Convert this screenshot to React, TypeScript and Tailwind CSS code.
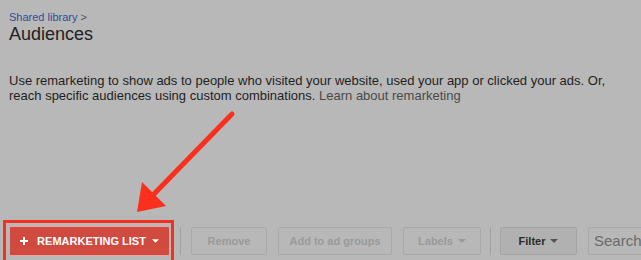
import React from "react";

function Caret({ className }: { className: string }) {
  return (
    <svg viewBox="0 0 8 4" className={className} fill="currentColor">
      <path d="M0 0h8L4 4z" />
    </svg>
  );
}

export default function App() {
  return (
    <div
      className="relative h-[260px] w-[641px] overflow-hidden bg-[#b8b8b8] text-[#1f1f1f]"
      style={{ fontFamily: '"Liberation Sans", Arial, sans-serif' }}
    >
      {/* Header */}
      <div className="px-[9px] pt-[11px]">
        <div className="text-[11px] leading-[13px]">
          <a className="text-[#2f4c9c]">Shared library</a>
          <span className="text-[#555]"> &gt;</span>
        </div>
        <h1 className="text-[18px] leading-[20px] text-[#222]">Audiences</h1>
        <p className="mt-[29px] text-[13px] leading-[15px] text-[#1f1f1f]">
          Use remarketing to show ads to people who visited your website, used your app or clicked your ads. Or,
          <br />
          reach specific audiences using custom combinations.{" "}
          <a className="text-[#4a4a4a]">Learn about remarketing</a>
        </p>
      </div>

      {/* Toolbar */}
      <div className="absolute left-[9px] top-[226px] flex items-center">
        <button className="flex h-[30px] w-[161px] items-center justify-center rounded-[2px] border border-[#e6a49c] bg-[#d04a3f] text-[11px] font-bold text-white">
          <svg viewBox="0 0 8 8" className="mr-[9px] h-[8px] w-[8px]" fill="currentColor">
            <path d="M3 0h2v3h3v2H5v3H3V5H0V3h3z" />
          </svg>
          <span>REMARKETING LIST</span>
          <Caret className="ml-[6px] h-[4px] w-[7px]" />
        </button>
        <div className="mx-[10px] h-[28px] w-px bg-[#a3a3a3]" />
        <button className="h-[28px] w-[76px] rounded-[2px] border border-[#a9a9a9] text-[11px] font-bold text-[#9a9a9a]">
          Remove
        </button>
        <button className="ml-[11px] h-[28px] w-[114px] rounded-[2px] border border-[#a9a9a9] text-[11px] font-bold text-[#9a9a9a]">
          Add to ad groups
        </button>
        <button className="ml-[11px] flex h-[28px] w-[78px] items-center justify-center gap-[5px] rounded-[2px] border border-[#a9a9a9] text-[11px] font-bold text-[#9a9a9a]">
          Labels
          <Caret className="h-[4px] w-[8px]" />
        </button>
        <div className="mx-[9px] h-[28px] w-px bg-[#a3a3a3]" />
        <button className="flex h-[28px] w-[77px] items-center justify-center gap-[5px] rounded-[2px] border border-[#a5a5a5] bg-[#b1b1b1] text-[11px] font-bold text-[#2a2a2a]">
          Filter
          <Caret className="h-[4px] w-[8px] text-[#555]" />
        </button>
        <div className="ml-[11px] flex h-[28px] w-[80px] items-center rounded-[2px] border border-[#a9a9a9] pl-[5px] text-[15px] text-[#6a6a6a]">
          Search
        </div>
      </div>

      {/* Annotation: highlight box */}
      <div className="absolute left-[3px] top-[220px] h-[50px] w-[171px] border-[3px] border-[#f4301f]" />

      {/* Annotation: arrow */}
      <svg className="absolute left-0 top-0" width="641" height="260" viewBox="0 0 641 260">
        <line x1="232" y1="114" x2="153" y2="195" stroke="#fb2f1d" strokeWidth="5" strokeLinecap="round" />
        <polygon points="137,212 142,182 166,206" fill="#fb2f1d" />
      </svg>
    </div>
  );
}
